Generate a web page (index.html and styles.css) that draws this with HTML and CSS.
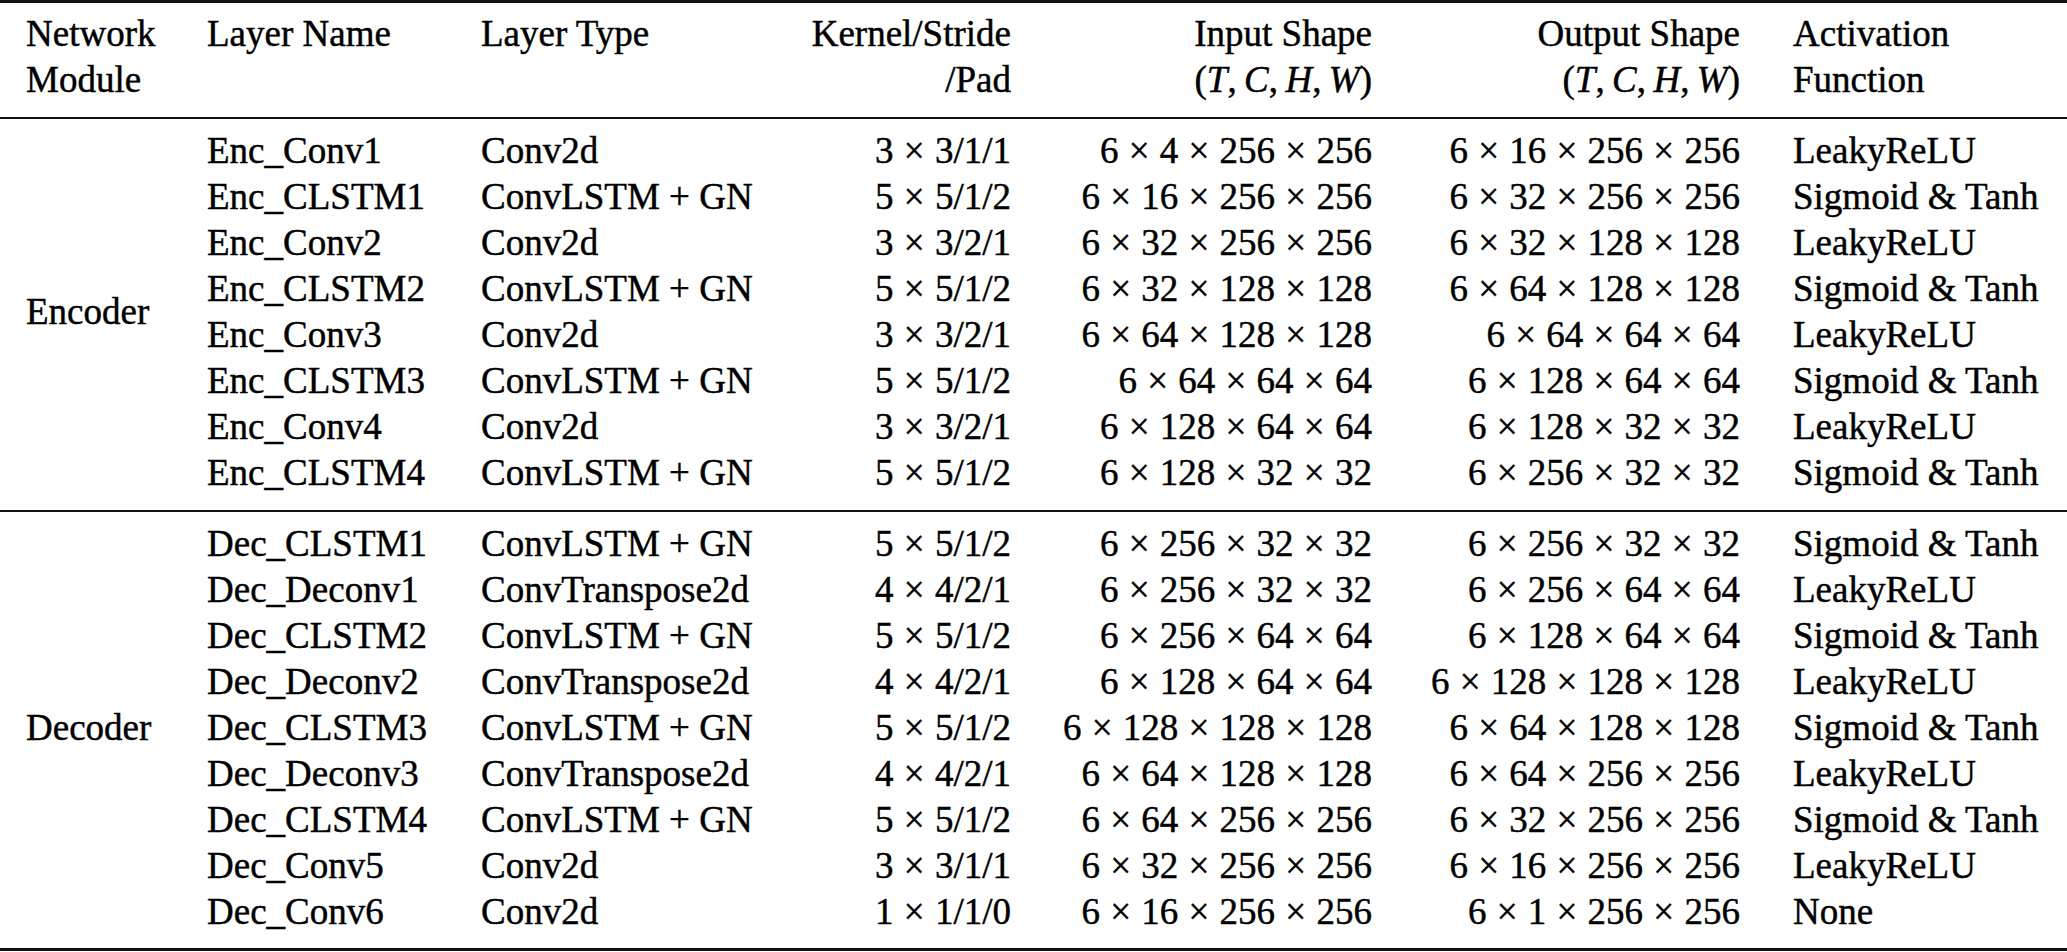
FILE: index.html
```html
<!DOCTYPE html>
<html>
<head>
<meta charset="utf-8">
<link rel="stylesheet" href="styles.css">
</head>
<body>
<table class="net">
<thead>
<tr>
<th class="c1">Network<br>Module</th>
<th class="c2">Layer Name</th>
<th class="c3">Layer Type</th>
<th class="c4 r">Kernel/Stride<br>/Pad</th>
<th class="c5 r">Input Shape<br>(<i>T</i>,&#8201;<i>C</i>,&#8201;<i>H</i>,&#8201;<i>W</i>)</th>
<th class="c6 r">Output Shape<br>(<i>T</i>,&#8201;<i>C</i>,&#8201;<i>H</i>,&#8201;<i>W</i>)</th>
<th class="c7">Activation<br>Function</th>
</tr>
</thead>
<tbody class="grp enc">
<tr class="first"><td class="mod" rowspan="8">Encoder</td><td>Enc_Conv1</td><td>Conv2d</td><td class="r">3 × 3/1/1</td><td class="r">6 × 4 × 256 × 256</td><td class="r">6 × 16 × 256 × 256</td><td class="act">LeakyReLU</td></tr>
<tr><td>Enc_CLSTM1</td><td>ConvLSTM + GN</td><td class="r">5 × 5/1/2</td><td class="r">6 × 16 × 256 × 256</td><td class="r">6 × 32 × 256 × 256</td><td class="act">Sigmoid &amp; Tanh</td></tr>
<tr><td>Enc_Conv2</td><td>Conv2d</td><td class="r">3 × 3/2/1</td><td class="r">6 × 32 × 256 × 256</td><td class="r">6 × 32 × 128 × 128</td><td class="act">LeakyReLU</td></tr>
<tr><td>Enc_CLSTM2</td><td>ConvLSTM + GN</td><td class="r">5 × 5/1/2</td><td class="r">6 × 32 × 128 × 128</td><td class="r">6 × 64 × 128 × 128</td><td class="act">Sigmoid &amp; Tanh</td></tr>
<tr><td>Enc_Conv3</td><td>Conv2d</td><td class="r">3 × 3/2/1</td><td class="r">6 × 64 × 128 × 128</td><td class="r">6 × 64 × 64 × 64</td><td class="act">LeakyReLU</td></tr>
<tr><td>Enc_CLSTM3</td><td>ConvLSTM + GN</td><td class="r">5 × 5/1/2</td><td class="r">6 × 64 × 64 × 64</td><td class="r">6 × 128 × 64 × 64</td><td class="act">Sigmoid &amp; Tanh</td></tr>
<tr><td>Enc_Conv4</td><td>Conv2d</td><td class="r">3 × 3/2/1</td><td class="r">6 × 128 × 64 × 64</td><td class="r">6 × 128 × 32 × 32</td><td class="act">LeakyReLU</td></tr>
<tr class="last"><td>Enc_CLSTM4</td><td>ConvLSTM + GN</td><td class="r">5 × 5/1/2</td><td class="r">6 × 128 × 32 × 32</td><td class="r">6 × 256 × 32 × 32</td><td class="act">Sigmoid &amp; Tanh</td></tr>
</tbody>
<tbody class="grp dec">
<tr class="first"><td class="mod" rowspan="9">Decoder</td><td>Dec_CLSTM1</td><td>ConvLSTM + GN</td><td class="r">5 × 5/1/2</td><td class="r">6 × 256 × 32 × 32</td><td class="r">6 × 256 × 32 × 32</td><td class="act">Sigmoid &amp; Tanh</td></tr>
<tr><td>Dec_Deconv1</td><td>ConvTranspose2d</td><td class="r">4 × 4/2/1</td><td class="r">6 × 256 × 32 × 32</td><td class="r">6 × 256 × 64 × 64</td><td class="act">LeakyReLU</td></tr>
<tr><td>Dec_CLSTM2</td><td>ConvLSTM + GN</td><td class="r">5 × 5/1/2</td><td class="r">6 × 256 × 64 × 64</td><td class="r">6 × 128 × 64 × 64</td><td class="act">Sigmoid &amp; Tanh</td></tr>
<tr><td>Dec_Deconv2</td><td>ConvTranspose2d</td><td class="r">4 × 4/2/1</td><td class="r">6 × 128 × 64 × 64</td><td class="r">6 × 128 × 128 × 128</td><td class="act">LeakyReLU</td></tr>
<tr><td>Dec_CLSTM3</td><td>ConvLSTM + GN</td><td class="r">5 × 5/1/2</td><td class="r">6 × 128 × 128 × 128</td><td class="r">6 × 64 × 128 × 128</td><td class="act">Sigmoid &amp; Tanh</td></tr>
<tr><td>Dec_Deconv3</td><td>ConvTranspose2d</td><td class="r">4 × 4/2/1</td><td class="r">6 × 64 × 128 × 128</td><td class="r">6 × 64 × 256 × 256</td><td class="act">LeakyReLU</td></tr>
<tr><td>Dec_CLSTM4</td><td>ConvLSTM + GN</td><td class="r">5 × 5/1/2</td><td class="r">6 × 64 × 256 × 256</td><td class="r">6 × 32 × 256 × 256</td><td class="act">Sigmoid &amp; Tanh</td></tr>
<tr><td>Dec_Conv5</td><td>Conv2d</td><td class="r">3 × 3/1/1</td><td class="r">6 × 32 × 256 × 256</td><td class="r">6 × 16 × 256 × 256</td><td class="act">LeakyReLU</td></tr>
<tr class="last"><td>Dec_Conv6</td><td>Conv2d</td><td class="r">1 × 1/1/0</td><td class="r">6 × 16 × 256 × 256</td><td class="r">6 × 1 × 256 × 256</td><td class="act">None</td></tr>
</tbody>
</table>
</body>
</html>
```
FILE: styles.css
```css
html, body {
  margin: 0;
  padding: 0;
  background: #ffffff;
}

body {
  font-family: "Liberation Serif", "Times New Roman", serif;
  font-size: 37px;
  line-height: 46px;
  color: #000000;
  -webkit-text-stroke: 0.45px #000000;
}

.net {
  width: 2067px;
  table-layout: fixed;
  border-collapse: separate;
  border-spacing: 0;
}

.net th,
.net td {
  box-sizing: border-box;
  padding: 0;
  text-align: left;
  font-weight: normal;
  white-space: nowrap;
  vertical-align: top;
}

.net i {
  font-style: italic;
}

.net .r {
  text-align: right;
}

.net tbody .r {
  word-spacing: 1px;
}

.net th {
  border-top: 3px solid #111;
  border-bottom: 2px solid #111;
  padding-top: 8px;
  padding-bottom: 14px;
}

.net .c1 { width: 207px; padding-left: 26px; }
.net .c2 { width: 274px; }
.net .c3 { width: 329px; }
.net .c4 { width: 201px; }
.net .c5 { width: 361px; }
.net .c6 { width: 368px; }
.net .c7 { width: 327px; padding-left: 53px; }

.net td.act {
  padding-left: 53px;
}

.net td.mod {
  padding-left: 26px;
  vertical-align: middle;
}

.grp .first td {
  padding-top: 9px;
}

.enc .last td,
.enc td.mod {
  padding-bottom: 14px;
  border-bottom: 2px solid #111;
}

.dec .last td,
.dec td.mod {
  padding-bottom: 13px;
  border-bottom: 3px solid #111;
}
```
